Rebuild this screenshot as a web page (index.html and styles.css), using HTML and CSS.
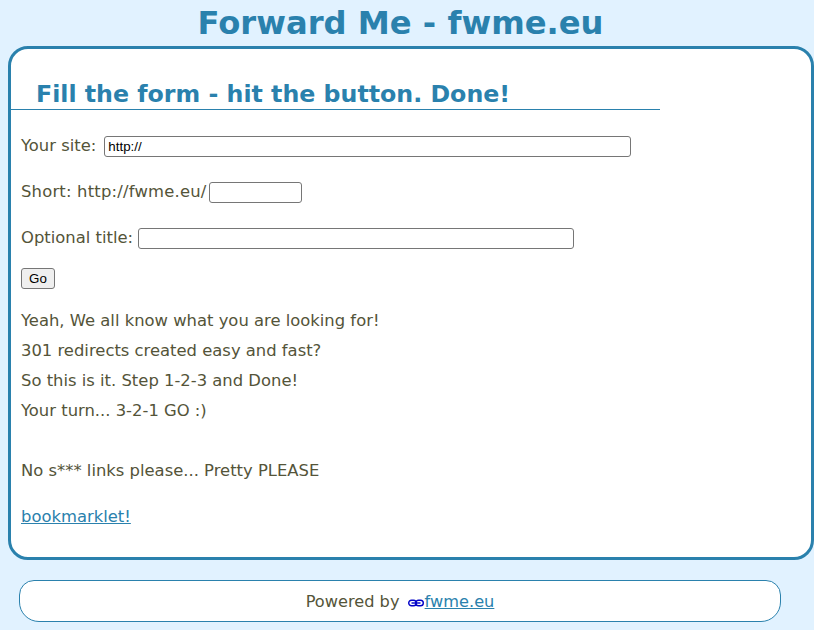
FILE: index.html
```html
<!DOCTYPE html>
<html>
  <head>
    <meta charset="UTF-8" />
    <title>Forward Me - fwme.eu</title>
    <link rel="stylesheet" href="styles.css">
  </head>
  <body>
    <h1>Forward Me - fwme.eu</h1>
    <div class="content">
      <h2>Fill the form - hit the button. Done!</h2>
      <form class="short-form">
        <div class="form-row">
          <label for="site">Your site:</label>
          <input class="site-input" id="site" type="text" value="http://" />
        </div>
        <div class="form-row">
          <label class="short-label" for="short">Short: http://fwme.eu/</label><input class="short-input" id="short" type="text" />
        </div>
        <div class="form-row">
          <label for="title">Optional title:</label>
          <input class="title-input" id="title" type="text" />
        </div>
        <div class="button-row">
          <button class="go-btn" type="button">Go</button>
        </div>
      </form>
      <p class="blurb">
        Yeah, We all know what you are looking for!<br />
        301 redirects created easy and fast?<br />
        So this is it. Step 1-2-3 and Done!<br />
        Your turn... 3-2-1 GO :)<br />
        <br />
        No s*** links please... Pretty PLEASE
      </p>
      <p class="blurb"><a href="#">bookmarklet!</a></p>
    </div>
    <div class="footer">
      Powered by
      <svg class="chain-icon" viewBox="0 0 16 8" xmlns="http://www.w3.org/2000/svg">
        <rect x="0.7" y="1.2" width="7.6" height="5.6" rx="2.8" />
        <rect x="7.7" y="1.2" width="7.6" height="5.6" rx="2.8" />
        <path d="M3.5 4h9" />
      </svg><a href="#">fwme.eu</a>
    </div>
  </body>
</html>
```

FILE: styles.css
```css
body {
  font-family: "DejaVu Sans", Verdana, sans-serif;
  font-size: 16.4px;
  margin: 0 0 0 8px;
  background-color: #e1f2ff;
  color: #545439;
  overflow: hidden;
}
a {
  color: #2a81ad;
}
h1 {
  color: #2a81ad;
  font-size: 32.2px;
  line-height: 46px;
  height: 46px;
  margin: 0;
  padding-right: 21px;
  text-align: center;
}
.content {
  background-color: #fff;
  border: 3px solid #2a81ad;
  border-radius: 20px;
  height: 508px;
  overflow: hidden;
}
h2 {
  color: #2a81ad;
  font-size: 23.7px;
  line-height: 30px;
  width: 624px;
  margin: 30px 0 0;
  padding: 0 0 0 25px;
  border-bottom: 1px solid #2a81ad;
}
.short-form {
  margin: 20px 10px 0;
}
.form-row {
  display: flex;
  align-items: center;
  height: 30px;
  margin-bottom: 16px;
  white-space: pre;
}
.short-label {
  letter-spacing: 0.2px;
}
input {
  box-sizing: border-box;
  height: 21px;
  margin-top: 2px;
  padding: 1px 3px;
  border: 1px solid #767676;
  border-radius: 3px;
  font-family: "Liberation Sans", Arial, sans-serif;
  font-size: 13.33px;
  color: #000;
}
.site-input {
  width: 527px;
  margin-left: 8px;
}
.short-input {
  width: 93px;
  margin-left: 3px;
}
.title-input {
  width: 436px;
  margin-left: 5px;
}
.button-row {
  display: flex;
  height: 22px;
}
.go-btn {
  box-sizing: border-box;
  width: 34px;
  height: 21px;
  padding: 0;
  border: 1px solid #767676;
  border-radius: 3px;
  background-color: #efefef;
  font-family: "Liberation Sans", Arial, sans-serif;
  font-size: 13.33px;
  color: #000;
}
.blurb {
  margin: 16px 10px;
  line-height: 30px;
}
.footer {
  box-sizing: border-box;
  width: 762px;
  height: 42px;
  margin: 20px 0 0 11px;
  background-color: #fff;
  border: 1px solid #2a81ad;
  border-radius: 15px 15px 20px 20px;
  font-size: 16.2px;
  line-height: 41px;
  text-align: center;
}
.chain-icon {
  width: 16px;
  height: 8px;
  margin-left: 3px;
  margin-right: 1px;
  fill: none;
  stroke: #0000c8;
  stroke-width: 1.4;
}
```
